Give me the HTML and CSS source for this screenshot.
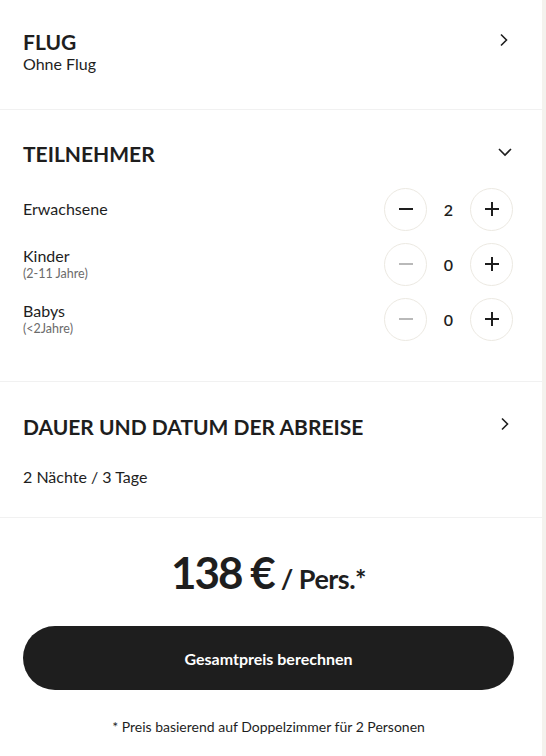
FILE: index.html
```html
<!DOCTYPE html>
<html lang="de">
<head>
<meta charset="utf-8">
<link rel="stylesheet" href="styles.css">
</head>
<body>
<div class="page">
  <main class="panel">
    <section class="section section-flug">
      <div class="head">
        <div>
          <h2 class="title">FLUG</h2>
          <div class="sub">Ohne Flug</div>
        </div>
        <svg class="chev" width="14" height="14" viewBox="0 0 14 14"><path d="M4 1.5 L9.5 7 L4 12.5" fill="none" stroke="#1e1e1e" stroke-width="1.6"/></svg>
      </div>
    </section>
    <section class="section section-teil">
      <div class="head">
        <h2 class="title">TEILNEHMER</h2>
        <svg class="chev" width="14" height="14" viewBox="0 0 14 14"><path d="M1 4 L7 10 L13 4" fill="none" stroke="#1e1e1e" stroke-width="1.6"/></svg>
      </div>
      <div class="rows">
        <div class="row">
          <div class="label">Erwachsene</div>
          <div class="counter">
            <span class="btn"><span class="minus"></span></span>
            <span class="num">2</span>
            <span class="btn"><span class="plus"></span></span>
          </div>
        </div>
        <div class="row">
          <div class="label">Kinder<small>(2-11 Jahre)</small></div>
          <div class="counter">
            <span class="btn off"><span class="minus"></span></span>
            <span class="num">0</span>
            <span class="btn"><span class="plus"></span></span>
          </div>
        </div>
        <div class="row">
          <div class="label">Babys<small>(&lt;2Jahre)</small></div>
          <div class="counter">
            <span class="btn off"><span class="minus"></span></span>
            <span class="num">0</span>
            <span class="btn"><span class="plus"></span></span>
          </div>
        </div>
      </div>
    </section>
    <section class="section section-dauer">
      <div class="head">
        <h2 class="title">DAUER UND DATUM DER ABREISE</h2>
        <svg class="chev" width="14" height="14" viewBox="0 0 14 14"><path d="M4 1.5 L9.5 7 L4 12.5" fill="none" stroke="#1e1e1e" stroke-width="1.6"/></svg>
      </div>
      <div class="sub dauer">2 Nächte / 3 Tage</div>
    </section>
    <section class="section section-price">
      <div class="price"><span class="amount">138 €</span> <span class="per">/ Pers.*</span></div>
      <button class="cta">Gesamtpreis berechnen</button>
      <p class="note">* Preis basierend auf Doppelzimmer für 2 Personen</p>
    </section>
  </main>
  <div class="edge"></div>
</div>
</body>
</html>
```
FILE: styles.css
```css
* { box-sizing: border-box; }
html, body { margin: 0; padding: 0; background: #fff; }
body { font-family: "Lato", "Noto Sans", sans-serif; color: #1e1e1e; }
.page { display: flex; min-height: 756px; }
.panel { width: 542px; }
.edge { width: 4px; background: #f4f2ee; }
.section { padding: 0 32px 0 23px; border-bottom: 1px solid #f1f1f1; }
.section-price { border-bottom: 0; }
.head { display: flex; justify-content: space-between; align-items: flex-start; }
.title { margin: 0; font-size: 21px; font-weight: 700; letter-spacing: 0; line-height: 24px; }
.sub { font-size: 16px; line-height: 20px; }
.chev { flex: none; margin-top: 4px; }
.section-flug { height: 110px; padding-top: 30px; }
.section-flug .head .chev { margin-top: 3px; margin-right: -1px; }
.section-teil { height: 272px; padding-top: 32px; }
.section-teil .head { margin-bottom: 22px; }
.section-teil .head .chev { margin-top: 3px; margin-right: -2px; }
.rows { display: flex; flex-direction: column; gap: 13px; }
.row { display: flex; justify-content: space-between; align-items: center; height: 42px; margin-right: -3px; }
.label { font-size: 16px; line-height: 20px; display: flex; flex-direction: column; }
.label small { font-size: 12.5px; line-height: 16px; color: #6b6b6b; }
.counter { display: flex; align-items: center; gap: 0; }
.btn { width: 43px; height: 43px; border: 1px solid #ece9e2; border-radius: 50%; display: flex; align-items: center; justify-content: center; position: relative; }
.num { width: 43px; text-align: center; font-size: 16px; font-weight: 600; }
.minus { width: 14px; height: 2px; background: #1e1e1e; }
.btn.off .minus { background: #b9b9b9; }
.plus { width: 14px; height: 14px; position: relative; }
.plus::before, .plus::after { content: ""; position: absolute; background: #1e1e1e; }
.plus::before { left: 0; top: 6px; width: 14px; height: 2px; }
.plus::after { left: 6px; top: 0; width: 2px; height: 14px; }
.section-dauer { height: 136px; padding-top: 33px; }
.section-dauer .head .chev { margin-top: 2px; margin-right: -2px; }
.dauer { margin-top: 28px; }
.section-price { padding-top: 26px; padding-right: 28px; display: flex; flex-direction: column; align-items: center; }
.price { display: flex; align-items: baseline; gap: 7px; line-height: 56px; }
.amount { font-size: 44px; font-weight: 700; letter-spacing: -2px; }
.per { font-size: 27px; font-weight: 700; letter-spacing: -0.5px; }
.cta { margin-top: 19px; width: 100%; height: 64px; border: 0; border-radius: 32px; background: #1e1e1e; color: #fff; font-family: inherit; font-size: 16px; font-weight: 700; }
.note { margin: 28px 0 0; font-size: 14px; line-height: 18px; }
```
